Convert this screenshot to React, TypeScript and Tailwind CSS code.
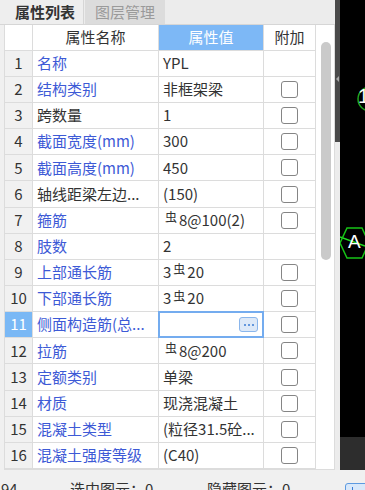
import React from 'react';

function Rebar() {
  return <span className="relative -top-[3px] px-[2px] text-[12px] leading-none">虫</span>;
}

type Row = { n: string; v: React.ReactNode; blue: boolean; cb: boolean; sel?: boolean };

const rows: Row[] = [
  { n: '名称', v: 'YPL', blue: true, cb: false },
  { n: '结构类别', v: '非框架梁', blue: true, cb: true },
  { n: '跨数量', v: '1', blue: false, cb: true },
  { n: '截面宽度(mm)', v: '300', blue: true, cb: true },
  { n: '截面高度(mm)', v: '450', blue: true, cb: true },
  { n: '轴线距梁左边...', v: '(150)', blue: false, cb: true },
  { n: '箍筋', v: <><Rebar />8@100(2)</>, blue: true, cb: true },
  { n: '肢数', v: '2', blue: true, cb: false },
  { n: '上部通长筋', v: <>3<Rebar />20</>, blue: true, cb: true },
  { n: '下部通长筋', v: <>3<Rebar />20</>, blue: true, cb: true },
  { n: '侧面构造筋(总...', v: '', blue: true, cb: true, sel: true },
  { n: '拉筋', v: <><Rebar />8@200</>, blue: true, cb: true },
  { n: '定额类别', v: '单梁', blue: true, cb: true },
  { n: '材质', v: '现浇混凝土', blue: true, cb: true },
  { n: '混凝土类型', v: '(粒径31.5砼...', blue: true, cb: true },
  { n: '混凝土强度等级', v: '(C40)', blue: true, cb: true },
];

function Checkbox() {
  return <div className="h-[17px] w-[17px] rounded-[3px] border-[1.5px] border-[#858585] bg-white" />;
}

export default function App() {
  return (
    <div className="flex h-[490px] w-[365px] flex-col overflow-hidden bg-[#f0f0f0] font-['Noto_Sans_CJK_SC',sans-serif] text-[15px] text-[#333]">
      <div className="flex h-[470px]">
        {/* left panel */}
        <div className="flex w-[335px] flex-col">
          {/* tabs */}
          <div className="flex h-[25px] border-b border-[#d6d6d6] bg-[#ececec]">
            <div className="flex w-[84px] items-center border-r border-[#d6d6d6] bg-[#eeeeee] pl-[15px] font-bold text-[#333]">
              属性列表
            </div>
            <div className="ml-[1px] flex w-[80px] items-center justify-center bg-[#dcdcdc] text-[#9a9a9a]">
              图层管理
            </div>
          </div>
          {/* table */}
          <div className="flex pl-[4px]">
            <div className="flex border-b border-l border-[#dcdcdc]">
              <div className="flex flex-col">
                {/* header */}
                <div className="flex h-[26px] bg-white">
                  <div className="w-[28px] border-r border-b border-[#dcdcdc]" />
                  <div className="flex w-[126px] items-center justify-center border-r border-b border-[#dcdcdc] text-[#333]">
                    属性名称
                  </div>
                  <div className="flex w-[105px] items-center justify-center border-r border-b border-[#dcdcdc] bg-[#7db8f6] text-white">
                    属性值
                  </div>
                  <div className="flex w-[52px] items-center justify-center border-r border-b border-[#dcdcdc] text-[#333]">
                    附加
                  </div>
                </div>
                {rows.map((r, i) => (
                  <div key={i} className="flex h-[26.15px]">
                    <div
                      className={
                        r.sel
                          ? 'flex w-[28px] items-center justify-center border-r border-b border-[#dcdcdc] bg-[#7ab8f5] text-white'
                          : 'flex w-[28px] items-center justify-center border-r border-b border-[#dcdcdc] bg-[#f1f1f1] text-[#333]'
                      }
                    >
                      {i + 1}
                    </div>
                    <div
                      className={
                        r.blue
                          ? 'flex w-[126px] items-center whitespace-nowrap border-r border-b border-[#dcdcdc] bg-white pl-[4px] text-[#3d5ad6]'
                          : 'flex w-[126px] items-center whitespace-nowrap border-r border-b border-[#dcdcdc] bg-white pl-[4px] text-[#333]'
                      }
                    >
                      {r.n}
                    </div>
                    <div className="relative flex w-[105px] items-center whitespace-nowrap border-r border-b border-[#dcdcdc] bg-white pl-[4px] text-[#333]">
                      {r.v}
                      {r.sel && (
                        <div className="absolute -top-px -left-px -right-px -bottom-px flex items-center justify-end border-2 border-[#74acef] bg-white pr-[4px]">
                          <div className="flex h-[15px] w-[19px] items-center justify-center gap-[2px] rounded-[3px] border border-[#8ab6ec] bg-[#dde9f8]">
                            <div className="h-[2px] w-[2px] rounded-full bg-[#3a7bd5]" />
                            <div className="h-[2px] w-[2px] rounded-full bg-[#3a7bd5]" />
                            <div className="h-[2px] w-[2px] rounded-full bg-[#3a7bd5]" />
                          </div>
                        </div>
                      )}
                    </div>
                    <div className="flex w-[52px] items-center justify-center border-r border-b border-[#dcdcdc] bg-white">
                      {r.cb && <Checkbox />}
                    </div>
                  </div>
                ))}
              </div>
              {/* scrollbar */}
              <div className="flex w-[19px] flex-col items-center border-r border-[#dcdcdc] bg-white pt-[17px]">
                <div className="ml-[1px] h-[218px] w-[10px] rounded-full bg-[#cacaca]" />
              </div>
            </div>
          </div>
        </div>
        {/* splitter */}
        <div className="flex w-[5px] flex-col">
          <div className="flex h-[142px] items-start bg-[#4a4a4a] pt-[76px] pl-[1px]">
            <div className="h-0 w-0 border-y-[3px] border-r-[3px] border-y-transparent border-r-[#a8a8a8]" />
          </div>
          <div className="flex-1 bg-[#ececec]" />
        </div>
        {/* canvas */}
        <div className="relative flex flex-1 flex-col">
          <div className="flex-1 bg-black" />
          <div className="h-[33px] bg-[#2d2d2d]" />
          <svg className="absolute left-0 top-0" width="25" height="470" viewBox="340 0 25 470">
            <circle cx="370" cy="99" r="12" fill="none" stroke="#1fa51f" strokeWidth="1.5" />
            <line x1="340" y1="237" x2="365" y2="246" stroke="#22dd22" strokeWidth="1.5" />
            <polygon points="340,243 347,228 362,228 369,243 362,258 347,258" fill="none" stroke="#17c417" strokeWidth="1.5" />
          </svg>
          <span className="absolute left-[18px] top-[86px] font-['Liberation_Sans',sans-serif] text-[20px] leading-none text-white">1</span>
          <span className="absolute left-[8px] top-[232px] font-['Liberation_Sans',sans-serif] text-[19px] leading-none text-white">A</span>
        </div>
      </div>
      {/* status bar */}
      <div className="flex h-[20px] items-start overflow-hidden whitespace-nowrap pt-[9px] text-[#333]">
        <span className="w-[70px] shrink-0 pl-[1px] leading-[20px]">94</span>
        <span className="w-[137px] shrink-0 leading-[20px]">选中图元：0</span>
        <span className="w-[138px] shrink-0 leading-[20px]">隐藏图元：0</span>
        <div className="mt-[4px] flex h-[16px] w-[24px] shrink-0 justify-center rounded-[3px] border border-[#5d9ae0] bg-[#d8e8fa] pt-[3px] pr-[10px]">
          <div className="h-[10px] w-[1px] bg-[#3a7bd5]" />
        </div>
      </div>
    </div>
  );
}
